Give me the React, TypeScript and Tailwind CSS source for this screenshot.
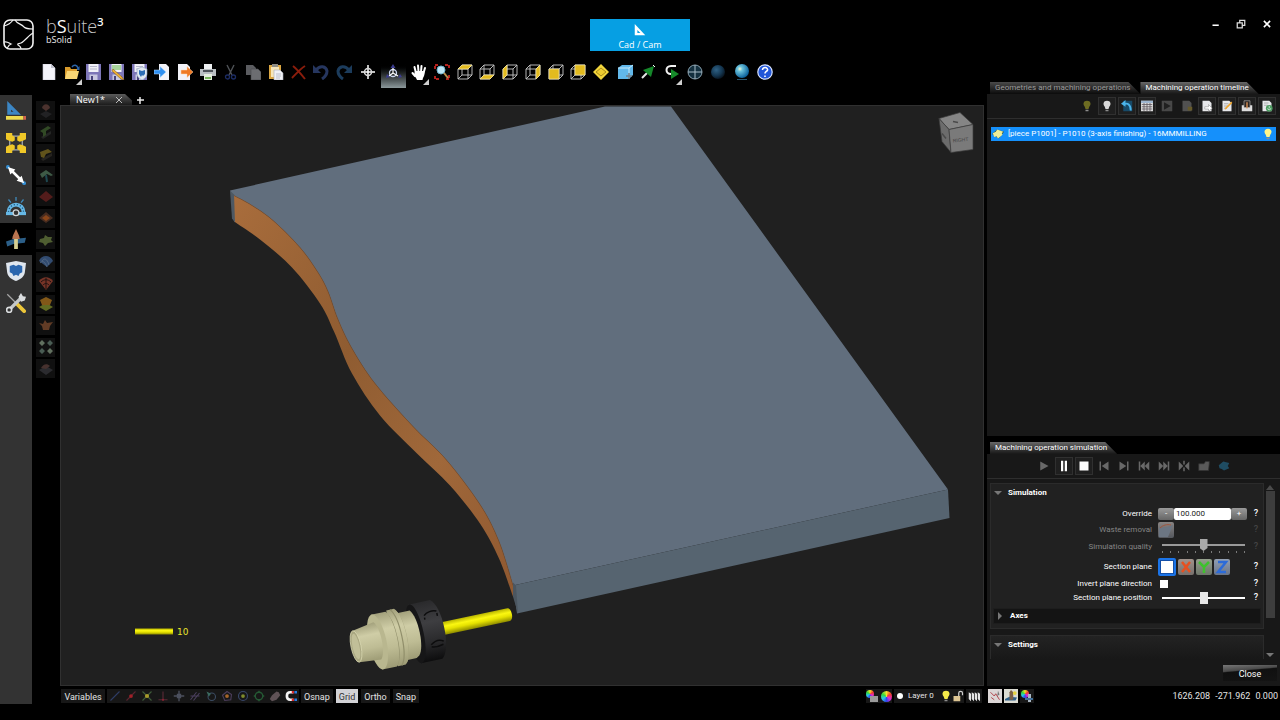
import { useState, type ReactNode } from "react";
import clsx from "clsx";

type Point = [number, number];

/* ---------- small helpers ---------- */

function Svg({ children, className = "size-4" }: { children: ReactNode; className?: string }) {
  return (
    <svg viewBox="0 0 16 16" className={clsx("block shrink-0", className)} fill="none" aria-hidden="true">
      {children}
    </svg>
  );
}

// Catmull-Rom spline through the points, as cubic segments
function spline(points: Point[]) {
  let d = "";
  for (let i = 0; i < points.length - 1; i++) {
    const p0 = points[Math.max(i - 1, 0)];
    const p1 = points[i];
    const p2 = points[i + 1];
    const p3 = points[Math.min(i + 2, points.length - 1)];
    d += ` C${p1[0] + (p2[0] - p0[0]) / 6} ${p1[1] + (p2[1] - p0[1]) / 6} ${p2[0] - (p3[0] - p1[0]) / 6} ${p2[1] - (p3[1] - p1[1]) / 6} ${p2[0]} ${p2[1]}`;
  }
  return d;
}

/* ---------- toolbar icons ---------- */

const Page = () => <path d="M2 0h8l4 4v12H2z" fill="#f4f4fa" stroke="#c9cad6" strokeWidth=".6" />;

const Floppy = () => (
  <>
    <path d="M0 0h15v16H0z" fill="#7d76b8" />
    <path d="M2.500 0h10v8h-10z" fill="#f1f1f8" />
    <path d="M4 2.500h7M4 5h7" stroke="#b6b6cc" />
    <path d="M3.500 10.500h8V16h-8z" fill="#c9c8e0" />
    <path d="M5 12h2v4H5z" fill="#47427c" />
  </>
);

const FACES = {
  top: "M1 5L5 1h10l-4 4z",
  bottom: "M1 15l4-4h10l-4 4z",
  left: "M1 5l4-4v10l-4 4z",
  right: "M11 5l4-4v10l-4 4z",
  front: "M1 5h10v10H1z",
  back: "M5 1h10v10H5z",
};

function Cube({ face }: { face: keyof typeof FACES }) {
  return (
    <Svg>
      <path d="M1 5h10v10H1zM5 1h10v10H5zM1 5l4-4M11 5l4-4M1 15l4-4M11 15l4-4" stroke="#c8c8c8" strokeWidth=".9" />
      <path d={FACES[face]} fill="#e3bb1f" stroke="#f3e6a8" strokeWidth=".7" />
    </Svg>
  );
}

const FILE_TOOLS = [
  { label: "New", icon: <Svg><Page /><path d="M10 0v4h4" fill="#bfc0cc" /></Svg> },
  {
    label: "Open",
    menu: true,
    icon: (
      <Svg>
        <path d="M8 3c2-3 5-2 6 1" stroke="#2c64a8" strokeWidth="1.500" />
        <path d="M15.500 2v4h-4z" fill="#2c64a8" />
        <path d="M1 3h5l1 2h6v10H1z" fill="#d99b2c" />
        <path d="M3 7h12l-2 8H1z" fill="#f8d574" />
      </Svg>
    ),
  },
  { label: "Save", icon: <Svg><Floppy /></Svg> },
  {
    label: "Save as",
    icon: (
      <Svg>
        <Floppy />
        <path d="M3 1h9v5H3z" fill="#a8d39b" />
        <path d="M4 5l9 8 2 3-3-1-9-8z" fill="#f5b334" stroke="#7c571b" strokeWidth=".6" />
      </Svg>
    ),
  },
  {
    label: "Save protected",
    icon: (
      <Svg>
        <Floppy />
        <path d="M5 5l5-2 5 2v5c0 3-3 5-5 6-2-1-5-3-5-6z" fill="#e2e9f2" stroke="#8fa3bd" strokeWidth=".6" />
        <path d="M7 6l3 1 3-1v4l-2 2-1-1-1 2-2-3z" fill="#2d6eb6" />
      </Svg>
    ),
  },
  {
    label: "Import",
    icon: <Svg><path d="M5 0h7l3 3v13H5z" fill="#f2f2f8" /><path d="M0 6h6V2.500L12 8l-6 5.500V10H0z" fill="#2f8ff0" stroke="#bcdcff" strokeWidth=".5" /></Svg>,
  },
  {
    label: "Export",
    icon: <Svg><path d="M1 0h9l3 3v13H1z" fill="#f2f2f8" /><path d="M4 6h6V2.500L16 8l-6 5.500V10H4z" fill="#ef7a25" stroke="#ffd9b5" strokeWidth=".5" /></Svg>,
  },
  {
    label: "Print",
    icon: (
      <Svg>
        <path d="M4 0h8v6H4z" fill="#eef0f2" />
        <path d="M0 5h16v7H0z" fill="#b9bec2" />
        <path d="M3 6h10v2H3z" fill="#4c5157" />
        <path d="M4 10h8v6H4z" fill="#e6efe0" />
        <path d="M5 13h6v2H5z" fill="#79b65c" />
      </Svg>
    ),
  },
  {
    label: "Cut",
    icon: (
      <Svg>
        <path d="M4 1l5 10M11 1L6 11" stroke="#4f5257" strokeWidth="1.400" />
        <circle cx="4.500" cy="13" r="2" stroke="#1c2c63" strokeWidth="1.300" />
        <circle cx="10.500" cy="13" r="2" stroke="#1c2c63" strokeWidth="1.300" />
      </Svg>
    ),
  },
  {
    label: "Copy",
    icon: <Svg><path d="M1 1h7l3 3v7H1z" fill="#5b5c60" /><path d="M6 5h7l3 3v8H6z" fill="#6c6d71" stroke="#4a4b4f" strokeWidth=".6" /></Svg>,
  },
  {
    label: "Paste",
    icon: (
      <Svg>
        <path d="M1 1h12v14H1z" fill="#dba743" />
        <path d="M4 0h6v3H4z" fill="#8d8b84" />
        <path d="M3 3h8v10H3z" fill="#f6e6ba" />
        <path d="M6 6h6l3 3v7H6z" fill="#f0f1f6" stroke="#a8abb8" strokeWidth=".6" />
        <path d="M8 10h5M8 12h5M8 14h4" stroke="#a8abb8" strokeWidth=".7" />
      </Svg>
    ),
  },
  { label: "Delete", icon: <Svg><path d="M2 2c4 3 8 8 12 13M14 2C9 5 5 10 1 14" stroke="#8b1d0c" strokeWidth="2" /></Svg> },
  {
    label: "Undo",
    icon: <Svg><path d="M3 6c4-5 10-4 11 1 0 4-2 6-5 8" stroke="#26365f" strokeWidth="3" /><path d="M0 1v8h8z" fill="#26365f" /></Svg>,
  },
  {
    label: "Redo",
    icon: <Svg><path d="M13 6C9 1 3 2 2 7c0 4 2 6 5 8" stroke="#1c3c5c" strokeWidth="3" /><path d="M16 1v8H8z" fill="#1c3c5c" /></Svg>,
  },
];

const VIEW_TOOLS = [
  {
    label: "Pan",
    menu: true,
    icon: (
      <Svg>
        <path d="M5 9L3.500 3M7.500 8L7 1.500M10 8l.5-6M12.500 9L14 4M4 12L1.500 9" stroke="#fff" strokeWidth="2" strokeLinecap="round" />
        <path d="M4 7h9.500v3c0 2-1.500 3-2 6H6c-.5-2-2-3-3-5z" fill="#fff" />
      </Svg>
    ),
  },
  {
    label: "Zoom all",
    icon: (
      <Svg>
        <path d="M1 5V1h4M11 1h4v4M15 11v4h-4M5 15H1v-4" stroke="#b0201c" strokeWidth="2" strokeDasharray="3 1" />
        <circle cx="7" cy="6" r="4" fill="#bfe6f5" stroke="#6fb1cc" />
        <path d="M10 9l4 5" stroke="#b98d4c" strokeWidth="2" />
      </Svg>
    ),
  },
  { label: "Top view", icon: <Cube face="top" /> },
  { label: "Bottom view", icon: <Cube face="bottom" /> },
  { label: "Left view", icon: <Cube face="left" /> },
  { label: "Right view", icon: <Cube face="right" /> },
  { label: "Front view", icon: <Cube face="front" /> },
  { label: "Back view", icon: <Cube face="back" /> },
  {
    label: "Isometric view",
    icon: <Svg><path d="M8 0l8 8-8 8-8-8z" fill="#f1d53c" /><path d="M8 4l5 4-5 4-5-4z" fill="#eccb30" stroke="#a88a18" /></Svg>,
  },
];

const RENDER_TOOLS = [
  {
    label: "Shading",
    icon: (
      <Svg>
        <path d="M1 4l4-3h11v10l-4 4H1z" fill="#62b8ea" />
        <path d="M1 4h11v11M12 4l4-3" stroke="#c6eafa" />
        <path d="M12 9v6M9 12h6" stroke="#71808c" strokeWidth="1.500" />
      </Svg>
    ),
  },
  {
    label: "Direction",
    icon: <Svg><path d="M2 14l5-5" stroke="#e5e5e5" strokeWidth="2" /><path d="M14 2l-3 11L3 6z" fill="#15882a" /><path d="M13 1l2 2" stroke="#fff" /></Svg>,
  },
  {
    label: "Turn",
    menu: true,
    icon: <Svg><path d="M12 2H7C1 2 1 10 7 10h2" stroke="#f2f2f2" strokeWidth="2" /><path d="M7 5l8 5-8 5z" fill="#168a2a" /></Svg>,
  },
  {
    label: "Origin",
    icon: <Svg><circle cx="8" cy="8" r="7" fill="#14303f" stroke="#8ba2b0" /><path d="M8 1v14M1 8h14" stroke="#a9bdc9" /></Svg>,
  },
  {
    label: "Dark sphere",
    icon: (
      <Svg>
        <radialGradient id="darkBall" cx=".38" cy=".35" r=".7">
          <stop stopColor="#2f6184" />
          <stop offset=".6" stopColor="#143650" />
          <stop offset="1" stopColor="#071019" />
        </radialGradient>
        <circle cx="8" cy="8" r="7" fill="url(#darkBall)" />
      </Svg>
    ),
  },
  {
    label: "Bright sphere",
    icon: (
      <Svg>
        <radialGradient id="brightBall" cx=".35" cy=".35" r=".7">
          <stop stopColor="#f4f8d0" />
          <stop offset=".25" stopColor="#6cc3dc" />
          <stop offset="1" stopColor="#045a96" />
        </radialGradient>
        <circle cx="8" cy="7" r="7" fill="url(#brightBall)" />
        <path d="M3 15.500h10" stroke="#2b566e" />
      </Svg>
    ),
  },
  {
    label: "Help",
    icon: (
      <Svg>
        <circle cx="8" cy="8" r="7.200" fill="#2156d8" stroke="#d8e4ff" strokeWidth="1.200" />
        <path d="M5.500 6c0-3.500 5.500-3 5 0-.3 1.500-2.500 1.500-2.500 3.500M8 11.500v1.500" stroke="#fff" strokeWidth="1.600" />
      </Svg>
    ),
  },
];

function ToolButton({ tool }: { tool: { label: string; icon: ReactNode; menu?: boolean } }) {
  return (
    <button type="button" aria-label={tool.label} className="relative size-4 shrink-0">
      {tool.icon}
      {tool.menu && (
        <svg viewBox="0 0 6 6" className="absolute -right-[2px] -bottom-[5px] size-[6px]" aria-hidden="true">
          <path d="M6 0v6H0z" fill="#cfcfcf" />
        </svg>
      )}
    </button>
  );
}

/* ---------- left rails ---------- */

const MODES = [
  {
    label: "Drawing",
    icon: (
      <>
        <path d="M1 0v11h11zM4 7v1.500h2z" fill="#3c86c4" fillRule="evenodd" />
        <path d="M0 12h14v3H0z" fill="#eedb50" />
        <path d="M14 12h2v3h-2z" fill="#d0604c" />
      </>
    ),
  },
  {
    label: "Edit",
    icon: (
      <>
        <path d="M3 2.500h10v11H3z" stroke="#a9adb3" />
        <path d="M0 0h5v2l2 1v3l-2 1-3-1-2-1zM16 0v5l-2 1-3 1-2-1V3l2-1V0zM0 16v-5l2-1 3-1 2 1v3l-2 1v2zM16 16h-5v-2l-2-1v-3l2-1 3 1 2 1z" fill="#f0c828" />
      </>
    ),
  },
  {
    label: "Dimension",
    icon: (
      <>
        <circle cx="1.500" cy="1.500" r="1.500" fill="#3590d6" />
        <circle cx="14.500" cy="14.500" r="1.500" fill="#3590d6" />
        <path d="M4 4l8 8" stroke="#fff" strokeWidth="2" />
        <path d="M1.500 1.500l6 2-4 4zM14.500 14.500l-6-2 4-4z" fill="#fff" />
      </>
    ),
  },
  {
    label: "Measure",
    icon: (
      <>
        <path d="M2 12a6 6 0 0112 0" stroke="#66b8e6" strokeWidth="3" />
        <path d="M2 12a6 6 0 0112 0" stroke="#225f88" strokeWidth="1" strokeDasharray="1 1.500" />
        <path d="M0 12h16v2.500H0z" fill="#66b8e6" />
        <path d="M8 0v3M2 2l2 2.500M14 2l-2 2.500" stroke="#3f8cc0" />
        <circle cx="8" cy="12.500" r="2.300" fill="#333" stroke="#cfd6da" />
      </>
    ),
  },
  {
    label: "Machining",
    active: true,
    icon: (
      <>
        <path d="M0 10l6-2 10-1-1 4-9 1-5 2z" fill="#2c5f88" />
        <path d="M8 0c1 3 3 5 3 8H5c0-3 2-5 3-8z" fill="#b97450" />
        <path d="M6.500 8h3v8h-3z" fill="#d6cf92" />
      </>
    ),
  },
  {
    label: "Protection",
    icon: (
      <>
        <path d="M0 1.500l8-1.500 8 1.500-1 8c-1 4-4 5-7 6.500-3-1.500-6-2.500-7-6.500z" fill="#dfe6ee" />
        <path d="M3 4l3-1 2 1 2-1 3 1v5l-2 1-1 2-2-1-2 1-1-2-2-1z" fill="#2a66ae" />
      </>
    ),
  },
  {
    label: "Settings",
    icon: (
      <>
        <path d="M1 1l7 7" stroke="#a6a6a6" />
        <path d="M8.500 8.500l6 6" stroke="#ecc63a" strokeWidth="3" strokeLinecap="round" />
        <path d="M12 4L3 13" stroke="#c4c8ca" strokeWidth="2.600" />
        <path d="M10 3l2-3 1.500 2.500L16 3l-1 3-3 1z" fill="#dadddf" />
        <circle cx="2.500" cy="13.500" r="2" fill="#333" stroke="#dadddf" strokeWidth="1.300" />
      </>
    ),
  },
];

const OPERATIONS = [
  { label: "Roughing", icon: <><path d="M2 11l6 4 6-4-6-3z" fill="#29292b" /><path d="M4 5c1-5 7-5 8 0l-4 3z" fill="#5f3e38" /></> },
  { label: "Routing", icon: <><path d="M3 13l10-6v3l-8 5z" fill="#2b2d2b" /><path d="M2 7l8-5 3 2-5 3v4l-3 2V9z" fill="#3c5c2c" /></> },
  { label: "Contour", icon: <><path d="M3 13l11-6v3l-9 5z" fill="#2e2b26" /><path d="M2 6l8-3 4 3-6 2-2 4-3-1z" fill="#7d6a1f" /></> },
  { label: "Drilling", icon: <><path d="M2 7l6-4 7 5-2 1-4-2-5 4z" fill="#4e7358" /><path d="M8 8l1 7" stroke="#235b66" strokeWidth="2" /></> },
  { label: "Pocket", icon: <path d="M8 2l7 6-7 5-7-5z" fill="#6a211f" /> },
  { label: "Open pocket", icon: <><path d="M8 2l7 6-7 5-7-5z" fill="#5b3626" /><path d="M8 5l4 3-4 3-4-3z" fill="#b3581e" /></> },
  { label: "Surfacing", icon: <path d="M2 7l4-1 1-3 3 2 4 0-1 3 2 2-5 1-3 3-2-3-4-1z" fill="#65793c" /> },
  { label: "Sweep", icon: <><path d="M1 8c2-6 11-7 14 0l-6 6z" fill="#3d5f90" /><path d="M4 8c2-3 5-3 7 4M2 10c3-3 5-1 7 4" stroke="#7790ad" strokeWidth=".7" /></> },
  { label: "Radial", icon: <><path d="M1 6c4-5 10-5 14 0l-7 9z" fill="#99402f" /><path d="M3 7c3-3 7-3 10 0M5 10c2-2 4-2 6 0M8 3v11" stroke="#241311" /></> },
  { label: "Layers", icon: <><path d="M8 7l7 4-7 4-7-4z" fill="#7d8a28" /><path d="M8 1l6 3-2 5H4L2 4z" fill="#a8711b" /></> },
  { label: "3D finishing", icon: <path d="M1 5l4 1 2-4 2 3 6-1-3 4-1 4H5L4 8z" fill="#7c4a2c" /> },
  {
    label: "Pattern",
    icon: (
      <>
        <path d="M4 1l3 3-3 3-3-3zM12 9l3 3-3 3-3-3z" fill="#7d907a" />
        <path d="M12 1l3 3-3 3-3-3zM4 9l3 3-3 3-3-3z" fill="#5c766a" />
      </>
    ),
  },
  { label: "Cutting", icon: <><path d="M1 9l7-4 7 4-7 5z" fill="#35353a" /><path d="M3 7c2-4 6-5 9-2l-4 3z" fill="#593c38" /></> },
];

/* ---------- 3D viewport ---------- */

const EDGE_TOP: Point[] = [
  [232, 194], [252, 205], [273, 220], [300, 247], [318, 272], [328, 291], [338, 319], [352, 348],
  [375, 383], [413, 426], [446, 459], [480, 504], [499, 541], [513, 585],
];
const EDGE_BOTTOM: Point[] = [
  [513, 596], [499, 558], [480, 523], [450, 485], [417, 453], [380, 415],
  [352, 373], [334, 331], [320, 303], [292, 267], [260, 239], [234, 221],
];

function Viewport() {
  return (
    <svg viewBox="60 105 924 580" preserveAspectRatio="xMidYMid meet" className="block size-full" role="img" aria-label="Workpiece">
      <defs>
        <linearGradient id="cone" x1="0" y1="0" x2="0" y2="1">
          <stop stopColor="#a3a17c" />
          <stop offset=".3" stopColor="#cfcda6" />
          <stop offset=".65" stopColor="#bebc94" />
          <stop offset="1" stopColor="#9d9b75" />
        </linearGradient>
        <linearGradient id="nut" x1="0" y1="0" x2="0" y2="1">
          <stop stopColor="#2a2a2c" />
          <stop offset=".35" stopColor="#3e3e41" />
          <stop offset=".7" stopColor="#29292b" />
          <stop offset="1" stopColor="#0d0d0e" />
        </linearGradient>
        <linearGradient id="rod" x1="0" y1="0" x2="0" y2="1">
          <stop stopColor="#b8b400" />
          <stop offset=".35" stopColor="#fbf711" />
          <stop offset=".6" stopColor="#e6e200" />
          <stop offset="1" stopColor="#8f8c00" />
        </linearGradient>
        <linearGradient id="wood" x1="0" y1="0" x2="1" y2="1">
          <stop stopColor="#a96d3c" />
          <stop offset=".4" stopColor="#8f5c31" />
          <stop offset=".7" stopColor="#a0683a" />
          <stop offset="1" stopColor="#8f5830" />
        </linearGradient>
      </defs>

      {/* panel */}
      <path d={`M232 194${spline(EDGE_TOP)}L948 489L671 106H605L230 190z`} fill="#616e7d" />
      <path d={`M232 194${spline(EDGE_TOP)}L513 596${spline(EDGE_BOTTOM)}z`} fill="url(#wood)" />
      <path d={`M232 194${spline(EDGE_TOP)}`} stroke="#7d4f2b" strokeWidth="1" fill="none" opacity=".6" />
      <path d="M230 190l2 28 3 4-1-28z" fill="#4d5863" />
      <path d="M513 585l435-96 1.500 28.500L517 613z" fill="#566470" />
      <path d="M513 582l3 3 2 28-5-17z" fill="#4b5660" />

      {/* tool holder, drawn along its own axis */}
      <g transform="translate(356 646) rotate(-12)">
        <path d="M86-6h70a3 6 0 010 13H86z" fill="url(#rod)" />
        <path d="M60-30h22c11 8 11 52 0 60H60z" fill="url(#nut)" />
        <ellipse cx="61" cy="0" rx="8" ry="30" fill="#161617" />
        <path d="M73-16c3-3 9-4 13-2M73-14v2M86-16v3M74 14c4-3 9-4 13-1M74 16c4 2 8 1 12 0" stroke="#0d0d0e" strokeWidth="1.500" fill="none" />
        <path d="M42-24h18c7 8 7 39 0 46l-3 2H42z" fill="url(#cone)" />
        <ellipse cx="45" cy="0" rx="7" ry="27" fill="#a5a37d" />
        <path d="M37-29h8c9 8 9 50 0 57h-8z" fill="url(#cone)" />
        <path d="M41-29c8 10 8 48 0 57M36-27c8 10 8 45 0 54" stroke="#918f6b" strokeWidth="1.200" fill="none" />
        <path d="M21-28h15c8 8 8 49 0 56H21z" fill="url(#cone)" />
        <ellipse cx="22" cy="0" rx="9" ry="28" fill="#b9b78f" />
        <path d="M0-16l22-4c6 6 6 32 0 38L0 16z" fill="url(#cone)" />
        <ellipse cx="0" cy="0" rx="5" ry="16" fill="#a9a781" stroke="#dddbb5" strokeWidth=".7" />
        <ellipse cx="0" cy="0" rx="3.500" ry="13" fill="#c1bf98" />
      </g>

      {/* tool diameter legend */}
      <path d="M135 628h38v6h-38z" fill="url(#rod)" />
      <text x="177" y="634" fontSize="9" fontFamily="'DejaVu Sans', sans-serif" fill="#e6e32c">10</text>

      {/* orientation cube */}
      <g stroke="#3c3c3c" strokeWidth=".7">
        <path d="M939 118l21-6 13 12-24 5z" fill="#858585" />
        <path d="M939 118l10 11 2 23-9-11z" fill="#6c6c6c" />
        <path d="M949 129l24-5v25l-22 3z" fill="#7a7a7a" />
      </g>
      <path d="M942 133l4 5M953 121l5 1" stroke="#4a4a4a" strokeWidth="1.500" />
      <text x="953" y="142" fontSize="5" fontFamily="'Liberation Sans', sans-serif" fill="#444" transform="rotate(-6 953 142)">RIGHT</text>
    </svg>
  );
}

/* ---------- right side ---------- */

function PanelTab({ children, active, onClick }: { children: ReactNode; active?: boolean; onClick?: () => void }) {
  return (
    <button
      type="button"
      onClick={onClick}
      className={clsx(
        "h-3 pr-[10px] pl-[5px] text-left leading-3 whitespace-nowrap bg-linear-to-b [clip-path:polygon(0_0,calc(100%-12px)_0,100%_100%,0_100%)]",
        active ? "from-[#686868] to-[#181818] text-white" : "from-[#4a4a4a] to-[#0c0c0c] text-[#9a9a9a]",
      )}
    >
      {children}
    </button>
  );
}

const Bulb = ({ color }: { color: string }) => (
  <Svg className="size-3">
    <path d="M8 1c5 0 6 5 3 8l-1 3H6l-1-3C2 6 3 1 8 1z" fill={color} />
    <path d="M6 13h4v2H6z" fill="#8d8d8d" />
  </Svg>
);

const Sheet = ({ dim }: { dim?: boolean }) => (
  <path d="M2 1h9l3 3v11H2z" fill={dim ? "#515151" : "#e6e7ea"} />
);

const TIMELINE_TOOLS = [
  { label: "Hide", dim: true, icon: <Bulb color="#6d6c22" /> },
  { label: "Show", icon: <Bulb color="#d8d8d8" /> },
  {
    label: "Restore",
    icon: <Svg className="size-3"><path d="M3 1h12v14H3z" fill="#174a68" /><path d="M3 6c6-3 10 0 10 8" stroke="#4bb4ea" strokeWidth="2.500" /><path d="M0 5l6-5v9z" fill="#4bb4ea" /></Svg>,
  },
  {
    label: "Table",
    icon: (
      <Svg className="size-3">
        <path d="M0 1h16v14H0z" fill="#dadada" />
        <path d="M0 1h16v3H0z" fill="#9fb6d0" />
        <path d="M1 6h14M1 9h14M1 12h14M4 4v11M8 4v11M12 4v11" stroke="#5a5058" />
      </Svg>
    ),
  },
  { label: "Simulate", dim: true, icon: <Svg className="size-3"><path d="M1 1h14v14H1z" fill="#484848" /><path d="M4 3l9 5-9 5z" fill="#202020" /></Svg> },
  { label: "Favourite", dim: true, icon: <Svg className="size-3"><Sheet dim /><path d="M9 9h6v5H9z" fill="#665a2a" /></Svg> },
  {
    label: "Send",
    icon: <Svg className="size-3"><Sheet /><path d="M5 9h5V6l5 5-5 4v-3H5z" fill="#fff" stroke="#888" strokeWidth=".7" /></Svg>,
  },
  {
    label: "Edit",
    icon: <Svg className="size-3"><Sheet /><path d="M4 5h6M4 8h6M4 11h4" stroke="#9a9a9a" /><path d="M14 2l1 2-8 8-2 1 1-3z" fill="#f0a52b" /></Svg>,
  },
  {
    label: "Machine",
    icon: <Svg className="size-3"><path d="M1 7h14v8H1z" fill="#ddd" /><path d="M4 1h8v9H4z" fill="#2b2623" stroke="#bbb" strokeWidth=".8" /><path d="M7 3h2v7l-1 2-1-2z" fill="#d08b55" /></Svg>,
  },
  {
    label: "Update",
    icon: <Svg className="size-3"><Sheet /><path d="M4 4h6M4 7h5" stroke="#9a9a9a" /><circle cx="11" cy="11" r="4.500" fill="#4d9c62" /><path d="M9 11a2 2 0 104 0M11 8v3" stroke="#dff3e2" /></Svg>,
  },
];

const PLAYER = [
  { label: "Play", icon: <path d="M3 2l11 6-11 6z" fill="#686868" /> },
  { label: "Pause", lit: true, icon: <path d="M4 1h3v14H4zM9 1h3v14H9z" fill="#fff" /> },
  { label: "Stop", lit: true, icon: <path d="M2 2h12v12H2z" fill="#fff" /> },
  { label: "Previous", icon: <path d="M2 2h2v12H2zM14 2v12L5 8z" fill="#686868" /> },
  { label: "Next", icon: <path d="M12 2h2v12h-2zM2 2v12l9-6z" fill="#686868" /> },
  { label: "First", icon: <path d="M1 2h2v12H1zM9 2v12L3 8zM15 2v12L9 8z" fill="#686868" /> },
  { label: "Last", icon: <path d="M13 2h2v12h-2zM7 2v12l6-6zM1 2v12l6-6z" fill="#686868" /> },
  { label: "Go to", icon: <path d="M7 1h2v5H7zM7 10h2v5H7zM1 2v12l6-6zM15 2v12L9 8z" fill="#686868" /> },
  { label: "Open", icon: <path d="M1 5h7l2-3h5v3l-1 9H1z" fill="#5a5a5a" stroke="#333" /> },
  { label: "Piece", icon: <path d="M1 7l6-5 8 2-2 4 2 3-7 3-3-2-3-1z" fill="#1f4c62" /> },
];

function IconStripButton({ label, lit, children }: { label: string; lit?: boolean; children: ReactNode }) {
  return (
    <button
      type="button"
      aria-label={label}
      className={clsx("flex size-[18px] items-center justify-center border", lit ? "border-[#303030] bg-[#1f1f1f]" : "border-transparent")}
    >
      {children}
    </button>
  );
}

function Field({ id, label, dim, className, children }: { id: string; label: string; dim?: boolean; className: string; children: ReactNode }) {
  return (
    <div className={clsx("flex items-center", className)}>
      <label htmlFor={id} className={clsx("mr-[6px] flex-1 text-right", dim && "text-[#858585]")}>
        {label}
      </label>
      <div className="flex w-[94px] items-center">{children}</div>
      <span className={clsx("w-2 text-center text-[9px] font-medium", dim && "text-[#454545]")}>?</span>
    </div>
  );
}

function Slider({ id, dim }: { id: string; dim?: boolean }) {
  const [value, setValue] = useState(50);
  return (
    <input
      id={id}
      type="range"
      value={value}
      onChange={(e) => setValue(Number(e.target.value))}
      disabled={dim}
      className={clsx(
        "ml-1 h-3 w-[83px] appearance-none bg-transparent [&::-webkit-slider-runnable-track]:h-[2px] [&::-webkit-slider-thumb]:-mt-[5px] [&::-webkit-slider-thumb]:h-3 [&::-webkit-slider-thumb]:w-2 [&::-webkit-slider-thumb]:appearance-none",
        dim
          ? "[&::-webkit-slider-runnable-track]:bg-[#9a9a9a] [&::-webkit-slider-thumb]:bg-[#a8a8a8] [&::-webkit-slider-thumb]:[clip-path:polygon(0_0,100%_0,100%_75%,50%_100%,0_75%)]"
          : "[&::-webkit-slider-runnable-track]:bg-white [&::-webkit-slider-thumb]:bg-[#e8e8e8]",
      )}
    />
  );
}

const AXIS_PLANES = [
  { label: "X", icon: "M4 3l8 10M12 3L4 13", color: "stroke-[#e8501f]", bg: "from-[#a0938c] to-[#77706c]" },
  { label: "Y", icon: "M3 3l5 5 5-5M8 8v6", color: "stroke-[#3ec22c]", bg: "from-[#94a08c] to-[#6e766a]" },
  { label: "Z", icon: "M4 3h8L4 13h8", color: "stroke-[#2c6bd8]", bg: "from-[#93a0b4] to-[#6a7486]" },
];

function SimulationForm() {
  const [override, setOverride] = useState("100.000");
  const [invert, setInvert] = useState(false);

  return (
    <div className="flex min-h-0 flex-1 flex-col pl-[3px] pt-1">
      <div className="flex min-h-0 flex-1">
        <div className="flex w-[274px] flex-col gap-[6px] overflow-hidden">
          <section className="border border-[#2b2b2b] bg-[#212121] pb-1">
            <h2 className="flex h-[18px] items-center gap-[6px] pl-[3px] font-bold">
              <Triangle open />
              Simulation
            </h2>
            <div className="flex flex-col pt-1 pr-[3px]">
              <Field id="override" label="Override" className="h-4">
                <button type="button" aria-label="Decrease" className="h-3 w-4 rounded-xs bg-linear-to-b from-[#9a9a9a] to-[#666] leading-[10px]">-</button>
                <input
                  id="override"
                  value={override}
                  onChange={(e) => setOverride(e.target.value)}
                  className="h-3 w-[57px] rounded-xs bg-white px-[2px] leading-3 text-[#222] outline-none"
                />
                <button type="button" aria-label="Increase" className="h-3 w-4 rounded-xs bg-linear-to-b from-[#9a9a9a] to-[#666] leading-[10px]">+</button>
              </Field>
              <Field id="waste" label="Waste removal" dim className="h-4">
                <button id="waste" type="button" className="size-4 rounded-xs bg-linear-to-b from-[#8a8583] to-[#55585e]">
                  <Svg className="size-4">
                    <path d="M1 6c5 0 9-1 14-3l-5 12H1z" fill="#6c7683" />
                    <path d="M2 6c3-3 7-4 11-3" stroke="#a1553c" />
                  </Svg>
                </button>
              </Field>
              <Field id="quality" label="Simulation quality" dim className="h-[18px]">
                <div className="flex flex-col">
                  <Slider id="quality" dim />
                  <div className="ml-1 flex h-1 w-[83px] justify-between">
                    {Array.from({ length: 11 }, (_, i) => (
                      <i key={i} className="h-[2px] w-px bg-[#7a7a7a]" />
                    ))}
                  </div>
                </div>
              </Field>
              <Field id="plane" label="Section plane" className="h-[22px]">
                <div className="flex items-center gap-[2px]">
                  <button id="plane" type="button" aria-label="None" className="flex size-[18px] items-center justify-center rounded-xs border-2 border-[#1b74e8] bg-[#1450a8]">
                    <span className="size-3 bg-white" />
                  </button>
                  {AXIS_PLANES.map((plane) => (
                    <button key={plane.label} type="button" aria-label={plane.label} className={clsx("size-4 rounded-xs bg-linear-to-b", plane.bg)}>
                      <Svg className="size-4">
                        <path d={plane.icon} strokeWidth="2.500" className={plane.color} />
                      </Svg>
                    </button>
                  ))}
                </div>
              </Field>
              <Field id="invert" label="Invert plane direction" className="h-3">
                <input
                  id="invert"
                  type="checkbox"
                  checked={invert}
                  onChange={(e) => setInvert(e.target.checked)}
                  className="ml-[2px] size-2 appearance-none bg-white checked:bg-[#1b74e8]"
                />
              </Field>
              <Field id="position" label="Section plane position" className="h-4">
                <Slider id="position" />
              </Field>
            </div>
            <h3 className="mx-[2px] mt-[2px] flex h-4 items-center gap-[6px] border border-[#1d1d1d] bg-[#141414] pl-[2px] font-bold">
              <Triangle />
              Axes
            </h3>
          </section>
          <section className="flex-1 border border-b-0 border-[#2b2b2b] bg-linear-to-b from-[#232323] to-[#181818]">
            <h2 className="flex h-[18px] items-center gap-[6px] pl-[3px] font-bold">
              <Triangle open />
              Settings
            </h2>
          </section>
        </div>
        {/* scroll bar */}
        <div className="ml-px flex w-[10px] flex-col items-center">
          <Triangle up />
          <div className="h-[127px] w-[9px] bg-[#3d3d3d]" />
          <div className="flex-1" />
          <Triangle open />
        </div>
      </div>
      <div className="flex justify-end pt-[6px] pr-[3px] pb-[5px]">
        <button type="button" className="h-4 w-[54px] bg-[linear-gradient(175deg,#777_0%,#4a4a4a_32%,#101010_38%,#141414_100%)] text-center text-[9px] leading-[18px]">
          Close
        </button>
      </div>
    </div>
  );
}

function Triangle({ open, up }: { open?: boolean; up?: boolean }) {
  return (
    <svg viewBox="0 0 8 8" className="block size-2 shrink-0" aria-hidden="true">
      <path d={up ? "M0 7l4-5 4 5z" : open ? "M0 2h8L4 6z" : "M2 0l4 4-4 4z"} fill={up ? "#4a4a4a" : "#777"} />
    </svg>
  );
}

/* ---------- status bar ---------- */

const SNAPS = [
  <path d="M2 14L14 2" stroke="#2e3d66" strokeWidth="1.500" />,
  <><path d="M2 14L14 2" stroke="#5a2530" strokeWidth="1.500" /><circle cx="8" cy="8" r="2.500" fill="#a02028" /></>,
  <><path d="M2 2l12 12M14 2L2 14" stroke="#3f5d3a" strokeWidth="1.500" /><circle cx="8" cy="8" r="2.800" fill="#a79a2a" /></>,
  <><path d="M8 2v11M2 13h12" stroke="#5a2a36" strokeWidth="1.500" /><circle cx="8" cy="13" r="1.500" fill="#8a2430" /></>,
  <path d="M8 1v14M1 8h14M6 6h4v4H6z" stroke="#4c505e" strokeWidth="1.800" />,
  <path d="M2 13L10 3M6 14l8-10M2 8h12" stroke="#4b3f5e" strokeWidth="1.500" />,
  <><circle cx="9" cy="9" r="5" stroke="#3b4c63" strokeWidth="1.500" /><path d="M2 2l6 3-3 4z" fill="#3b6a60" /></>,
  <><path d="M8 2l6 4-1 7-8 1-3-7z" stroke="#4c3e5c" strokeWidth="1.500" /><circle cx="8" cy="8" r="2.500" fill="#a8662a" /></>,
  <><circle cx="8" cy="8" r="6" stroke="#38476a" strokeWidth="1.500" /><circle cx="8" cy="8" r="2.500" fill="#7e8a2c" /></>,
  <><circle cx="8" cy="8" r="5" stroke="#255a34" strokeWidth="1.800" /><path d="M8 1v3M8 12v3M1 8h3M12 8h3" stroke="#255a34" strokeWidth="2" /></>,
  <path d="M1 12l3-5 6-5 3 1 2 4-5 6-3 1-3 1z" fill="#5f5256" />,
  <>
    <path d="M11 3H7C1 3 1 13 7 13h4" stroke="#f4f4f4" strokeWidth="3.500" />
    <path d="M9 1.300h3v3.500H9zM9 11.300h3v3.500H9z" fill="#d42a2a" />
    <path d="M12.500 1.300H16v3.500h-3.500zM12.500 11.300H16v3.500h-3.500z" fill="#2c7be0" />
  </>,
];

function ColorWheel({ small }: { small?: boolean }) {
  return (
    <span className="relative flex size-3 items-center justify-center">
      <span
        className={clsx(
          "rounded-full bg-[conic-gradient(#f6e12c,#f23b2e,#e22bd0,#3444f0,#28c8e8,#35d83a,#f6e12c)]",
          small ? "mr-1 mb-1 size-2" : "size-[11px]",
        )}
      />
    </span>
  );
}

function StatusBar() {
  const [modes, setModes] = useState<Record<string, boolean>>({ Grid: true });

  return (
    <footer className="col-span-2 col-start-2 row-start-4 flex items-center pt-[2px] pl-px text-[9px] leading-4 text-[#e4e4e4]">
      <button type="button" className="h-[14px] w-11 bg-[#171717]">Variables</button>
      <div className="ml-[2px] flex h-[14px] items-center bg-[#171717]">
        {SNAPS.map((icon, i) => (
          <button key={i} type="button" aria-label={`Snap ${i + 1}`} className="flex w-4 justify-center">
            <Svg className="size-3">{icon}</Svg>
          </button>
        ))}
      </div>
      <div className="ml-[2px] flex gap-[3px]">
        {["Osnap", "Grid", "Ortho", "Snap"].map((m) => (
          <button
            key={m}
            type="button"
            aria-pressed={!!modes[m]}
            onClick={() => setModes((s) => ({ ...s, [m]: !s[m] }))}
            className={clsx("h-[14px] px-[3px]", modes[m] ? "bg-[#d2d2d6] text-[#333]" : "bg-[#171717]")}
          >
            {m}
          </button>
        ))}
      </div>
      <div className="ml-auto flex w-[414px] items-center">
        <div className="flex h-[14px] w-[26px] items-center gap-[2px] bg-[#171717]">
          <span className="relative">
            <ColorWheel small />
            <span className="absolute right-0 bottom-0 h-[6px] w-2 bg-[#9a9a9a]" />
          </span>
          <ColorWheel />
        </div>
        <div className="ml-[2px] flex h-[14px] w-[70px] items-center bg-[#171717] pl-[3px]">
          <span className="size-[6px] rounded-full bg-white" />
          <span className="mr-auto ml-[5px] text-[8px] whitespace-nowrap">Layer 0</span>
          <Bulb color="#f4ea4a" />
          <Svg className="size-3">
            <path d="M2 8h9v7H2z" fill="#dcc492" />
            <path d="M9 8V4c0-3 5-3 5 0v3" stroke="#cfcfcf" strokeWidth="1.600" />
          </Svg>
        </div>
        <div className="ml-[2px] flex h-[14px] w-4 items-center justify-center bg-[#171717]">
          <Svg className="size-3">
            <path d="M1 3l3 2v10L1 12zM5 3l3 2v10l-3-3zM9 3l3 2v10l-3-3zM13 3l3 2v10l-3-3z" fill="#e4e4e4" />
          </Svg>
        </div>
        <div className="ml-[6px] flex gap-[2px]">
          <button type="button" aria-label="Geometries" className="flex size-[14px] items-center justify-center bg-[#dbd6d6]">
            <Svg className="size-3"><path d="M2 3l5 5 2-3 5 8M3 10l4 3" stroke="#b0454c" strokeWidth="1.300" /><path d="M12 1l2 5-3 2z" fill="#777" /></Svg>
          </button>
          <button type="button" aria-label="Machinings" className="flex size-[14px] items-center justify-center bg-[#dbdbd2]">
            <Svg className="size-3"><path d="M0 12l6-3 10 1-2 4H0z" fill="#2f5f88" /><path d="M6 3l2-3 3 3v10H6z" fill="#7c5f46" /><circle cx="13" cy="4" r="2.500" fill="#e6d340" /></Svg>
          </button>
          <button type="button" aria-label="Colours" className="relative flex size-[14px] items-center justify-center bg-[#171717]">
            <ColorWheel small />
            <span className="absolute right-[3px] bottom-px h-2 w-[3px] bg-[#a9b6c2]" />
            <span className="absolute right-px bottom-[3px] h-[2px] w-2 bg-[#3f6f9a]" />
          </button>
        </div>
        <div className="ml-auto flex gap-[5px] pr-[2px]">
          <span>1626.208</span>
          <span>-271.962</span>
          <span>0.000</span>
        </div>
      </div>
    </footer>
  );
}

/* ---------- page ---------- */

export default function App() {
  const [panel, setPanel] = useState("timeline");

  return (
    <div className="grid h-screen min-h-[640px] grid-cols-[60px_minmax(0,1fr)_296px] grid-rows-[60px_34px_minmax(0,1fr)_18px] bg-black pb-4 font-[Roboto,sans-serif] text-[8px] text-white">
      <header className="col-span-3 grid grid-cols-3 items-start pt-[19px] font-['Open_Sans','Noto_Sans',sans-serif] text-[9px]">
        <div className="flex pl-[3px]">
          <svg viewBox="0 0 32 32" className="size-8" fill="none" stroke="#f2f2f2" aria-hidden="true">
            <rect x="1" y="1" width="29" height="29" rx="6" strokeWidth="1.600" />
            <path d="M1 7c4-1 7-3 9-6M12 1c2 4 7 4 9 7 2 2 6 2 9 2M30 14c-4 2-8 8-12 10-2 1-4 0-3 2 2 1 3 2 3 4M1 23c3-1 5 1 7 2-3 1-3 3-4 5" strokeWidth="1.200" />
          </svg>
          <div className="-mt-[3px] ml-[11px]">
            <h1 className="text-[18px] leading-5 font-light text-[#c4c4c4]">
              b<b className="text-white">S</b>uite<b className="text-white">³</b>
            </h1>
            <p className="leading-2 text-[#ececec]">bSolid</p>
          </div>
        </div>
        <button type="button" className="flex h-8 w-[100px] flex-col items-center justify-self-center bg-[#069fe3] pt-[5px]">
          <Svg className="size-3"><path d="M1 0v15h14zM4.500 8v4h4z" fill="#fff" fillRule="evenodd" /></Svg>
          <span className="leading-[18px]">Cad / Cam</span>
        </button>
        <div className="flex justify-self-end gap-4 pr-2">
          <button type="button" aria-label="Minimise"><Svg className="size-[10px]"><path d="M4 10h10" stroke="#fff" strokeWidth="2.500" /></Svg></button>
          <button type="button" aria-label="Restore"><Svg className="size-[10px]"><path d="M2 6h8v8H2zM6 6V2h8v8h-4" stroke="#ddd" strokeWidth="2" /></Svg></button>
          <button type="button" aria-label="Close window"><Svg className="size-[10px]"><path d="M3 3l10 10M13 3L3 13" stroke="#fff" strokeWidth="2.500" /></Svg></button>
        </div>
      </header>

      {/* main toolbar */}
      <div role="toolbar" className="col-span-2 row-start-2 flex items-start pt-1 pl-[41px]">
        <div className="flex w-[311px] justify-between">
          {FILE_TOOLS.map((tool) => <ToolButton key={tool.label} tool={tool} />)}
        </div>
        <button type="button" aria-label="Centre" className="ml-2 size-4">
          <Svg><path d="M8 1v14M1 8h14" stroke="#fff" strokeWidth="1.500" /><circle cx="8" cy="8" r="3.500" stroke="#d8d8d8" strokeWidth="1.500" /></Svg>
        </button>
        <button type="button" aria-label="Rotate" className="ml-[5px] flex h-6 w-[25px] justify-center bg-linear-to-b from-black to-[#8d9a9d]">
          <Svg>
            <circle cx="7" cy="9" r="3.500" stroke="#c9d4ee" strokeWidth="1.300" />
            <path d="M7 9V3M7 9l5 3M7 9l-4 3" stroke="#fff" strokeWidth="1.200" />
            <path d="M4.500 4L7 0l2.500 4zM0 14l1-4 3 3zM16 13l-2-3-2 4z" fill="#3b3c8e" />
          </Svg>
        </button>
        <div className="ml-[5px] flex w-[198px] justify-between">
          {VIEW_TOOLS.map((tool) => <ToolButton key={tool.label} tool={tool} />)}
        </div>
        <div className="ml-2 flex w-[156px] justify-between">
          {RENDER_TOOLS.map((tool) => <ToolButton key={tool.label} tool={tool} />)}
        </div>
      </div>

      {/* left rails */}
      <div className="row-span-2 row-start-3 flex pt-px">
        <nav className="w-8 bg-[#333]">
          {MODES.map((mode) => (
            <button
              key={mode.label}
              type="button"
              aria-label={mode.label}
              className={clsx("flex h-8 w-8 items-center justify-center", mode.active && "bg-black")}
            >
              <Svg className="size-5">{mode.icon}</Svg>
            </button>
          ))}
        </nav>
        <div className="mt-[6px] ml-1 flex h-[277px] flex-col justify-between">
          {OPERATIONS.map((op) => (
            <button key={op.label} type="button" aria-label={op.label} className="flex h-[19px] w-[19px] items-center justify-center bg-[#101010]">
              <Svg className="size-4 opacity-75">{op.icon}</Svg>
            </button>
          ))}
        </div>
      </div>

      {/* document */}
      <main className="col-start-2 row-start-3 flex min-h-0 flex-col">
        <div className="flex h-[11px] shrink-0 items-start pl-[10px]">
          <div className="flex h-[11px] w-[62px] items-center bg-linear-to-b from-[#5c5c5c] to-[#1c1c1c] pt-px pl-[6px] font-['Open_Sans','Noto_Sans',sans-serif] text-[9px] leading-3 [clip-path:polygon(0_0,calc(100%-7px)_0,100%_60%,100%_100%,0_100%)]">
            New1*
            <button type="button" aria-label="Close tab" className="ml-auto pr-[10px]">
              <svg viewBox="0 0 6 6" className="size-[6px]" aria-hidden="true"><path d="M0 0l6 6M6 0L0 6" stroke="#bbb" /></svg>
            </button>
          </div>
          <button type="button" aria-label="New tab" className="mt-[2px] ml-1">
            <svg viewBox="0 0 8 8" className="size-2" aria-hidden="true"><path d="M4 1v7M1 4h7" stroke="#e8e8e8" strokeWidth="1.500" /></svg>
          </button>
        </div>
        <div className="min-h-0 flex-1 bg-[#202020] shadow-[inset_0_0_0_1px_#303030]">
          <Viewport />
        </div>
      </main>

      {/* side panels */}
      <aside className="col-start-3 row-span-2 row-start-2 flex min-h-0 flex-col pt-[22px] pl-[3px]">
        <div className="flex pl-[3px]">
          <PanelTab active={panel === "geometries"} onClick={() => setPanel("geometries")}>Geometries and machining operations</PanelTab>
          <PanelTab active={panel === "timeline"} onClick={() => setPanel("timeline")}>Machining operation timeline</PanelTab>
        </div>
        <section className="flex min-h-0 flex-1 flex-col bg-[#181818]">
          <div className="flex justify-end gap-[2px] border-b border-[#2e2e2e] pt-[3px] pr-1 pb-[3px]">
            {TIMELINE_TOOLS.map((tool) => (
              <IconStripButton key={tool.label} label={tool.label} lit={!tool.dim}>{tool.icon}</IconStripButton>
            ))}
          </div>
          <ul className="mx-1 mt-2">
            <li className="flex h-[14px] items-center bg-[#1590fb] pl-px">
              <Svg className="size-3"><path d="M0 8l7-6 9 3-7 9z" fill="#3d5a2c" /><path d="M1 7l4-2 2-3 8 3-2 2 1 2-6 5-2-3-3 1z" fill="#f0ee98" /></Svg>
              <span className="ml-1 flex-1 whitespace-nowrap">[piece P1001] - P1010 (3-axis finishing) - 16MMMILLING</span>
              <span className="mr-[2px]"><Bulb color="#fdf68a" /></span>
            </li>
          </ul>
        </section>
        <div className="mt-[6px] flex pl-[3px]">
          <PanelTab active>Machining operation simulation</PanelTab>
        </div>
        <section className="flex h-[232px] shrink-0 flex-col bg-[#181818]">
          <div className="flex gap-[2px] border-b border-[#2e2e2e] pt-[3px] pb-[3px] pl-12">
            {PLAYER.map((item) => (
              <IconStripButton key={item.label} label={item.label} lit={item.lit}>
                <Svg className="size-3">{item.icon}</Svg>
              </IconStripButton>
            ))}
          </div>
          <SimulationForm />
        </section>
      </aside>

      <StatusBar />
    </div>
  );
}
